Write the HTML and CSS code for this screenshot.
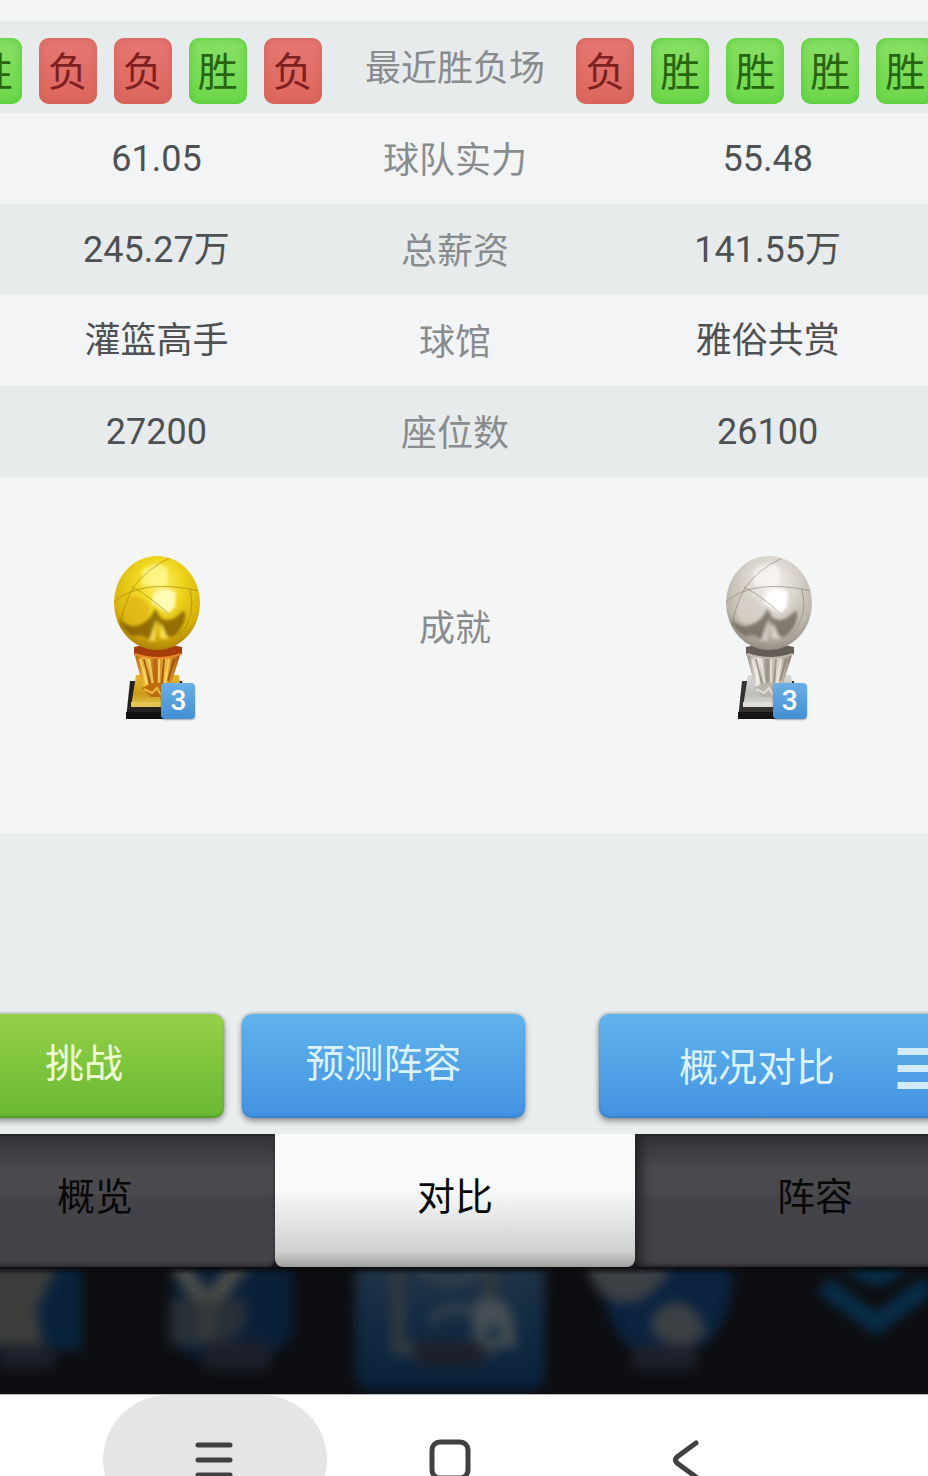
FILE: index.html
```html
<!DOCTYPE html>
<html lang="zh-CN">
<head>
<meta charset="utf-8">
<meta name="viewport" content="width=device-width, initial-scale=1">
<title>对比</title>
<link rel="stylesheet" href="styles.css">
</head>
<body>
<main class="panel">
  <table class="compare">
    <colgroup><col class="col-home"><col class="col-label"><col class="col-away"></colgroup>
    <tbody>
      <tr class="row-form">
        <td><div class="form form-home"><span class="result win">胜</span><span class="result loss">负</span><span class="result loss">负</span><span class="result win">胜</span><span class="result loss">负</span></div></td>
        <th scope="row">最近胜负场</th>
        <td><div class="form"><span class="result loss">负</span><span class="result win">胜</span><span class="result win">胜</span><span class="result win">胜</span><span class="result win">胜</span></div></td>
      </tr>
      <tr><td>61.05</td><th scope="row">球队实力</th><td>55.48</td></tr>
      <tr><td>245.27万</td><th scope="row">总薪资</th><td>141.55万</td></tr>
      <tr><td>灌篮高手</td><th scope="row">球馆</th><td>雅俗共赏</td></tr>
      <tr><td>27200</td><th scope="row">座位数</th><td>26100</td></tr>
      <tr class="row-awards">
        <td>
          <div class="trophy">
            <svg class="trophy-art" viewBox="0 0 130 190" aria-hidden="true">
              <defs>
                <radialGradient id="gBall" cx=".52" cy=".3" r=".72"><stop offset="0" stop-color="#fff27a"/><stop offset=".35" stop-color="#f0d820"/><stop offset=".75" stop-color="#d9b30c"/><stop offset="1" stop-color="#a87b05"/></radialGradient>
                <linearGradient id="gStem"><stop offset="0" stop-color="#b4560a"/><stop offset=".25" stop-color="#f6c944"/><stop offset=".45" stop-color="#b8610b"/><stop offset=".65" stop-color="#f3bd3a"/><stop offset="1" stop-color="#a64508"/></linearGradient>
                <linearGradient id="gBase" x2="0" y2="1"><stop offset="0" stop-color="#e7b92b"/><stop offset=".6" stop-color="#c99a1c"/><stop offset="1" stop-color="#e9ca52"/></linearGradient>
                <clipPath id="gClip"><ellipse cx="66" cy="63" rx="43" ry="47"/></clipPath>
                <filter id="soft" x="-20%" y="-20%" width="140%" height="140%"><feGaussianBlur stdDeviation="1.4"/></filter>
              </defs>
              <path d="M39 141 91 141 94 179H35Z" fill="#25211e"/><path d="M35 172H94V179H35Z" fill="#111"/>
              <path d="M45 135H88L92 167H40Z" fill="url(#gBase)"/><path d="M40 162H92V167H40Z" fill="#e3c454"/>
              <path d="M43 112H90L79 147H52Z" fill="url(#gStem)"/>
              <path d="M49 119 56 144M58 119 62 145M68 119 68 145M78 119 74 144" stroke="#fbe27b" stroke-width="2" fill="none" opacity=".7"/>
              <path d="M53 119 59 144M73 119 71 144M83 119 77 141" stroke="#873408" stroke-width="2" fill="none" opacity=".7"/>
              <path d="M51 148Q66 138 80 146L71 157H60Z" fill="#bd6d0d"/><path d="M53 149 61 153 66 148 70 155" stroke="#ffdc52" stroke-width="2" fill="none" opacity=".7"/>
              <path d="M43 107Q67 100 91 107V114Q67 122 43 114Z" fill="#a53d0a"/><path d="M44 114Q67 122 90 114" stroke="#e9872a" stroke-width="2" fill="none"/>
              <ellipse cx="66" cy="63" rx="43" ry="47" fill="url(#gBall)"/>
              <g clip-path="url(#gClip)"><g filter="url(#soft)">
                <path d="M28 79Q40 91 52 83Q62 77 64 68L69 77Q78 86 93 70Q97 79 88 91Q80 101 74 94L66 80 62 104Q55 93 42 96Q31 91 28 79Z" fill="#7b5403" opacity=".75"/>
                <path d="M34 62Q43 51 55 61Q62 70 54 79Q43 88 34 76Z" fill="#e3b31b" opacity=".7"/>
                <path d="M51 31Q66 18 77 29L76 45H51Z" fill="#fff994" opacity=".7"/>
                <path d="M62 54Q74 44 85 53L84 67 77 74 61 63Z" fill="#fffbb4"/>
                <path d="M65 80 58 101H64ZM70 83 77 99 69 98Z" fill="#ffe761" opacity=".9"/>
              </g>
              <path d="M23 62Q50 38 109 51M79 18Q55 29 42 48Q30 70 29 90M41 47Q57 55 78 74M99 49Q106 76 88 96" stroke="#a17b08" stroke-width="1" fill="none" opacity=".6"/></g>
            </svg>
            <span class="count">3</span>
          </div>
        </td>
        <th scope="row">成就</th>
        <td>
          <div class="trophy">
            <svg class="trophy-art" viewBox="0 0 130 190" aria-hidden="true">
              <defs>
                <radialGradient id="sBall" cx=".52" cy=".3" r=".72"><stop offset="0" stop-color="#f8f5f0"/><stop offset=".35" stop-color="#ded9d2"/><stop offset=".75" stop-color="#bdb7ad"/><stop offset="1" stop-color="#8d877c"/></radialGradient>
                <linearGradient id="sStem"><stop offset="0" stop-color="#88827a"/><stop offset=".25" stop-color="#f3efe7"/><stop offset=".45" stop-color="#989186"/><stop offset=".65" stop-color="#ded8c9"/><stop offset="1" stop-color="#827a6d"/></linearGradient>
                <linearGradient id="sBase" x2="0" y2="1"><stop offset="0" stop-color="#d9d9d9"/><stop offset=".6" stop-color="#bdbdba"/><stop offset="1" stop-color="#e1dfd8"/></linearGradient>
              </defs>
              <path d="M39 141 91 141 94 179H35Z" fill="#34322f"/><path d="M35 172H94V179H35Z" fill="#171614"/>
              <path d="M45 135H88L92 167H40Z" fill="url(#sBase)"/><path d="M40 162H92V167H40Z" fill="#deddd5"/>
              <path d="M43 112H90L79 147H52Z" fill="url(#sStem)"/>
              <path d="M49 119 56 144M58 119 62 145M68 119 68 145M78 119 74 144" stroke="#f5f2e9" stroke-width="2" fill="none" opacity=".7"/>
              <path d="M53 119 59 144M73 119 71 144M83 119 77 141" stroke="#857d70" stroke-width="2" fill="none" opacity=".7"/>
              <path d="M51 148Q66 138 80 146L71 157H60Z" fill="#b8b4ac"/><path d="M53 149 61 153 66 148 70 155" stroke="#eee" stroke-width="2" fill="none" opacity=".7"/>
              <path d="M43 107Q67 100 91 107V114Q67 122 43 114Z" fill="#625d55"/><path d="M44 114Q67 122 90 114" stroke="#c0bab0" stroke-width="2" fill="none"/>
              <ellipse cx="66" cy="63" rx="43" ry="47" fill="url(#sBall)"/>
              <g clip-path="url(#gClip)"><g filter="url(#soft)">
                <path d="M28 79Q40 91 52 83Q62 77 64 68L69 77Q78 86 93 70Q97 79 88 91Q80 101 74 94L66 80 62 104Q55 93 42 96Q31 91 28 79Z" fill="#686157" opacity=".75"/>
                <path d="M34 62Q43 51 55 61Q62 70 54 79Q43 88 34 76Z" fill="#d9cfc8" opacity=".8"/>
                <path d="M51 31Q66 18 77 29L76 45H51Z" fill="#f8f6f3" opacity=".8"/>
                <path d="M62 54Q74 44 85 53L84 67 77 74 61 63Z" fill="#fff"/>
                <path d="M65 80 58 101H64ZM70 83 77 99 69 98Z" fill="#ddd8d0" opacity=".9"/>
              </g>
              <path d="M23 62Q50 38 109 51M79 18Q55 29 42 48Q30 70 29 90M41 47Q57 55 78 74M99 49Q106 76 88 96" stroke="#847d72" stroke-width="1" fill="none" opacity=".6"/></g>
            </svg>
            <span class="count">3</span>
          </div>
        </td>
      </tr>
    </tbody>
  </table>
  <div class="actions">
    <button class="action challenge" type="button">挑战</button>
    <button class="action" type="button">预测阵容</button>
    <button class="action picker" type="button">
      <span>概况对比</span>
      <svg class="picker-icon" viewBox="0 0 54 41" aria-hidden="true"><path d="M0 3.5H54M0 20.5H54M0 37.5H54" stroke="#d2ebff" stroke-width="7"/></svg>
    </button>
  </div>
</main>
<nav class="tabs" aria-label="球队">
  <button class="tab" type="button">概览</button>
  <button class="tab active" type="button" aria-current="page">对比</button>
  <button class="tab" type="button">阵容</button>
</nav>
<div class="backdrop">
  <svg class="backdrop-art" viewBox="0 0 928 127" preserveAspectRatio="none" aria-hidden="true">
    <defs>
      <filter id="haze" x="-10%" y="-10%" width="120%" height="120%" color-interpolation-filters="sRGB"><feGaussianBlur stdDeviation="6"/></filter>
      <linearGradient id="tile" x2="0" y2="1"><stop offset="0" stop-color="#27384a"/><stop offset=".55" stop-color="#132b42"/><stop offset="1" stop-color="#08213b"/></linearGradient>
      <linearGradient id="edge" x2="0" y2="1"><stop offset="0" stop-color="#0a0b0e"/><stop offset="1" stop-color="#0a0b0e" stop-opacity="0"/></linearGradient>
    </defs>
    <g filter="url(#haze)">
      <path d="M-20-20H82V84H-20Z" fill="#09223c"/>
      <path d="M-20-10H58Q50 20 37 40L43 78H-20Z" fill="#3b3d3b"/>
      <path d="M176-20H292V70L270 90H190L168 70Z" fill="#0a2038"/>
      <path d="M177-5 207 40 242-5M207 35V78" stroke="#494c49" stroke-width="18" fill="none"/>
      <path d="M170 32H246V58L225 78H170Z" fill="#303538" opacity=".8"/>
      <path d="M355-30H545V105Q545 123 527 123H373Q355 123 355 105Z" fill="url(#tile)"/>
      <path d="M398-10V82H490V-10" stroke="#30393f" stroke-width="14" fill="none"/>
      <path d="M418 0Q450 30 482 0M430 54Q455 30 480 52" stroke="#35424a" stroke-width="9" fill="none"/>
      <path d="M473 42Q480 22 490 35Q508 28 512 50L517 80H474Z" fill="#464f53"/><circle cx="494" cy="66" r="8" fill="#173044"/>
      <path d="M590-20H732V20Q728 60 702 80H628Q604 54 590-20Z" fill="#0a233f"/>
      <path d="M585-10H668V5Q650 38 620 36Q590 28 585-10Z" fill="#3d4045"/>
      <path d="M650 62Q654 36 678 35Q700 38 706 68L676 85Z" fill="#3c4044"/>
      <path d="M0 78H54V102H0ZM204 74H269V103H204ZM416 75H484V100H416ZM632 78H697V103H632Z" fill="#1d202b"/>
      <path d="M823 18 876 57 929 18M850-4 876 10 903-4" stroke="#082e49" stroke-width="19" fill="none"/>
    </g>
    <path d="M0 0H928V8H0Z" fill="url(#edge)"/>
  </svg>
</div>
<nav class="system" aria-label="系统导航">
  <button class="system-key pressed" type="button" aria-label="最近任务"><svg class="system-icon" viewBox="0 0 44 44"><path d="M5 7H37M5 22H37M5 37H37"/></svg></button>
  <button class="system-key" type="button" aria-label="主屏幕"><svg class="system-icon" viewBox="0 0 44 44"><rect x="4" y="4" width="36" height="36" rx="8"/></svg></button>
  <button class="system-key" type="button" aria-label="返回"><svg class="system-icon" viewBox="0 0 44 44"><path d="M33 5 14 19Q11 22 14 25L33 39"/></svg></button>
</nav>
</body>
</html>
```
FILE: styles.css
```css
* { box-sizing: border-box; }
body {
  margin: 0;
  min-height: 100vh;
  display: flex;
  flex-direction: column;
  overflow-x: hidden;
  background: #f3f4f6;
  color: #4e5153;
  font-family: Roboto, "Noto Sans CJK SC", sans-serif;
  font-size: 36px;
  line-height: 48px;
}
button {
  margin: 0;
  border: 0;
  padding: 0;
  font: inherit;
}
.panel {
  flex: 1;
  display: flex;
  flex-direction: column;
  padding-top: 21px;
  overflow: hidden;
}

/* Team comparison */
.compare {
  width: 100%;
  table-layout: fixed;
  border-collapse: collapse;
  text-align: center;
}
.col-home { width: 35%; }
.col-label { width: 27%; }
.col-away { width: 38%; }
.compare tr { height: 91px; }
.compare tr:nth-child(odd) { background: #e7ebec; }
.compare td,
.compare th { padding: 0; white-space: nowrap; }
.compare td:first-child { padding-right: 12px; }
.compare td:last-child { padding-left: 32px; }
.compare th {
  padding-top: 4px;
  padding-left: 10px;
  color: #898c8e;
  font-weight: 400;
}
.compare .row-form { height: 92px; }
.compare .row-form td:first-child { padding-right: 3px; }
.compare .row-form td:last-child { padding-left: 1px; }
.compare .row-form td { padding-top: 8px; }
.form {
  display: flex;
  gap: 17px;
  overflow: hidden;
}
.form-home { justify-content: flex-end; }
.result {
  flex: none;
  width: 58px;
  height: 66px;
  padding-top: 2px;
  border-radius: 10px;
  font-size: 40px;
  line-height: 66px;
}
.win {
  background: linear-gradient(#8ae066, #6ed84b);
  box-shadow: inset 0 0 10px #52c936;
  color: #286510;
}
.loss {
  background: linear-gradient(#e67874, #dd665d);
  box-shadow: inset 0 0 10px #cf6259;
  color: #7f2020;
}
.compare .row-awards { height: 356px; background: #f4f6f6; }
.compare .row-awards td { padding-bottom: 40px; }
.compare .row-awards th { padding-bottom: 56px; }
.trophy {
  position: relative;
  width: 130px;
  height: 190px;
  margin: 0 auto;
}
.trophy-art { display: block; width: 100%; height: 100%; }
.count {
  position: absolute;
  left: 70px;
  top: 143px;
  width: 34px;
  height: 36px;
  border-radius: 4px;
  background: linear-gradient(#6bb0e5, #438fd2);
  box-shadow: 0 1px 2px #0005;
  color: #fff;
  font-size: 28px;
  font-weight: 500;
  line-height: 36px;
}

/* Action buttons */
.actions {
  flex: 1;
  display: grid;
  grid-template-columns: 280fr 18fr 283fr 74fr 385fr;
  align-items: end;
  margin: 0 -56px;
  padding: 24px 0 16px;
  background: #e9edee;
}
.action {
  height: 104px;
  padding-bottom: 4px;
  border-radius: 10px;
  background: linear-gradient(#60b4eb, #4392e2);
  box-shadow: 0 3px 6px #0006, 0 -1px 3px #0003, inset 0 -2px 2px #2869aa66;
  color: #dcf2ff;
  font-size: 39px;
}
.action:nth-child(2) { grid-column: 3; }
.action:nth-child(3) { grid-column: 5; }
.challenge {
  background: linear-gradient(#96d049, #69b832);
  box-shadow: 0 3px 6px #0006, 0 -1px 3px #0003, inset 0 -2px 2px #36751b66;
  color: #efffd8;
}
.picker {
  display: flex;
  align-items: center;
  justify-content: space-between;
  padding: 4px 32px 0 80px;
}
.picker-icon { width: 55px; height: 41px; }

/* Tabs */
.tabs {
  display: grid;
  grid-template-columns: repeat(3, 1fr);
  margin: 0 -67px 0 -85px;
  background: #17191c;
}
.tab {
  height: 133px;
  padding-bottom: 8px;
  border-radius: 0 0 8px 8px;
  background: linear-gradient(#323135, #4b4a4f 28%, #4a494e 45%, #444349 48%, #444349);
  box-shadow: inset 0 2px 1px #29282c, inset 0 -2px 4px #29282c;
  color: #080808;
  font-size: 38px;
}
.tab.active {
  background: linear-gradient(#f8f9f9 42%, #cfd1d0 88%, #9fa19f);
  box-shadow: none;
  color: #050505;
}
.tab.active + .tab {
  box-shadow: inset 0 2px 1px #29282c, inset 12px 0 12px -6px #232225, inset 0 -2px 4px #29282c;
}

/* Dimmed menu behind the panel */
.backdrop { height: 127px; overflow: hidden; background: #0d0e11; }
.backdrop-art { display: block; width: 100%; height: 100%; }

/* Device navigation */
.system {
  display: grid;
  grid-template-columns: repeat(3, 1fr);
  height: 82px;
  padding: 0 13.5% 0 10.5%;
  border-top: 1px solid #bbb;
  overflow: hidden;
  background: #fff;
}
.system-key {
  display: grid;
  place-items: center;
  height: 130px;
  margin: 0 6px;
  border-radius: 65px;
  background: none;
}
.pressed { background: #e5e5e5; }
.system-icon {
  width: 44px;
  height: 44px;
  fill: none;
  stroke: #414141;
  stroke-width: 5;
  stroke-linecap: round;
}
```
